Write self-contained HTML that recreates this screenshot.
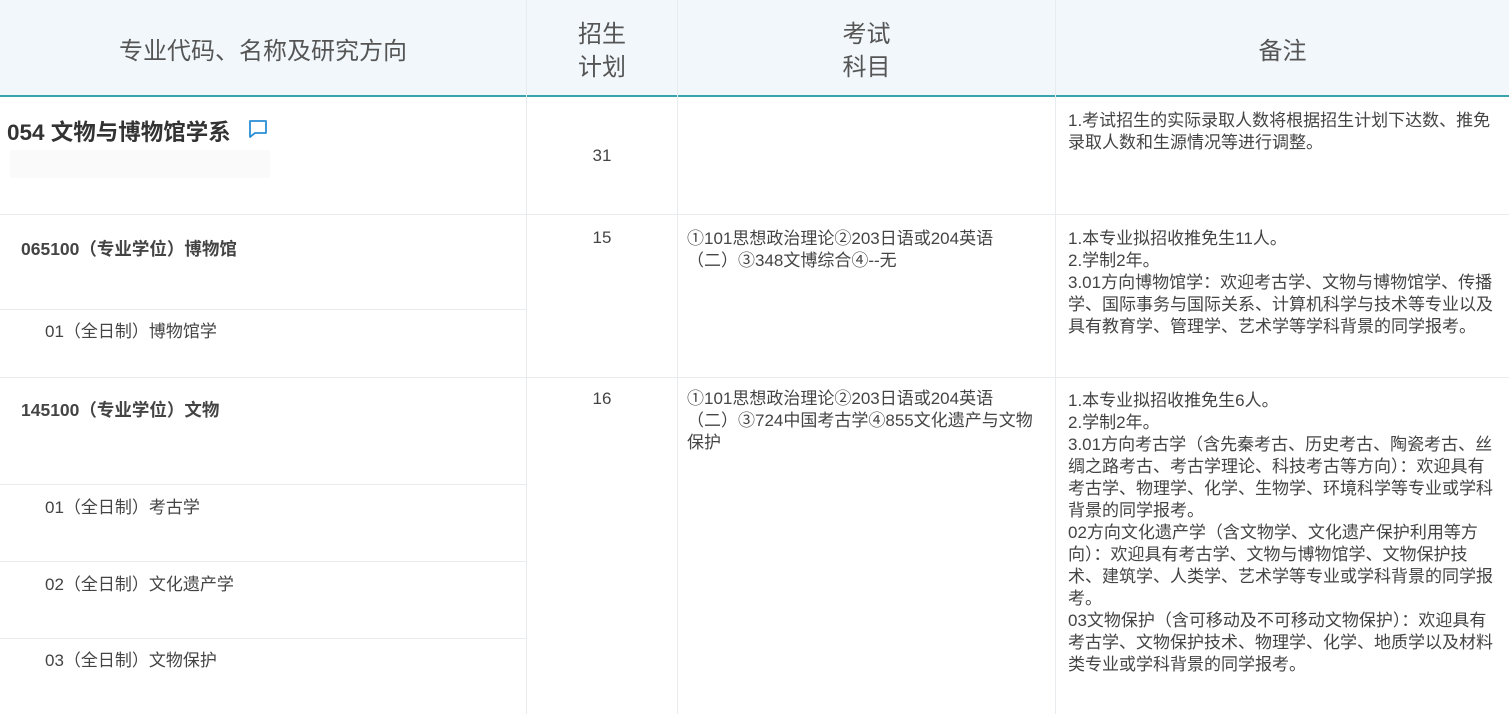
<!DOCTYPE html>
<html><head><meta charset="utf-8"><style>
body{margin:0;width:1509px;height:714px;overflow:hidden;background:#fff;font-family:"Liberation Sans","Noto Sans CJK SC",sans-serif;color:#444;position:relative}
.a{position:absolute;white-space:nowrap}
.v{position:absolute;top:0;bottom:0;width:1px;background:#e8ecef}
.h{position:absolute;height:1px;background:#e8ecef}
.hd{font-size:24px;color:#555;text-align:center;line-height:33px}
.t{font-size:17px;line-height:22px;color:#444}
</style></head><body>
<div class="a" style="left:0;top:0;width:1509px;height:95px;background:#f2f7fb"></div>
<div class="a" style="left:0;top:95px;width:1509px;height:2px;background:#3aa4ad"></div>
<div class="v" style="left:526px"></div>
<div class="v" style="left:677px"></div>
<div class="v" style="left:1055px"></div>
<div class="h" style="left:0;right:0;top:214px"></div>
<div class="h" style="left:0;right:0;top:377px"></div>
<div class="h" style="left:0;width:526px;top:309px"></div>
<div class="h" style="left:0;width:526px;top:484px"></div>
<div class="h" style="left:0;width:526px;top:561px"></div>
<div class="h" style="left:0;width:526px;top:638px"></div>

<div class="a hd" style="left:0;width:526px;top:35px">专业代码、名称及研究方向</div>
<div class="a hd" style="left:527px;width:150px;top:18px">招生<br>计划</div>
<div class="a hd" style="left:678px;width:377px;top:18px">考试<br>科目</div>
<div class="a hd" style="left:1056px;width:453px;top:35px">备注</div>

<div class="a" style="left:7px;top:115px;font-size:22.5px;font-weight:bold;color:#333">054 文物与博物馆学系</div>
<svg class="a" style="left:248px;top:119px" width="20" height="20" viewBox="0 0 20 20"><path d="M2 2h16v12H7l-5 4z" fill="none" stroke="#2b8fd6" stroke-width="1.8" stroke-linejoin="round"/></svg>
<div class="a" style="left:10px;top:150px;width:260px;height:28px;background:#fafafa"></div>

<div class="a t" style="left:527px;width:150px;text-align:center;top:145px">31</div>
<div class="a t" style="left:527px;width:150px;text-align:center;top:227px">15</div>
<div class="a t" style="left:527px;width:150px;text-align:center;top:388px">16</div>

<div class="a t" style="left:1068px;top:110px">1.考试招生的实际录取人数将根据招生计划下达数、推免<br>录取人数和生源情况等进行调整。</div>

<div class="a" style="left:21px;top:236px;font-size:17.5px;font-weight:bold;color:#444">065100（专业学位）博物馆</div>
<div class="a t" style="left:45px;top:321px">01（全日制）博物馆学</div>
<div class="a" style="left:21px;top:397px;font-size:17.5px;font-weight:bold;color:#444">145100（专业学位）文物</div>
<div class="a t" style="left:45px;top:497px">01（全日制）考古学</div>
<div class="a t" style="left:45px;top:574px">02（全日制）文化遗产学</div>
<div class="a t" style="left:45px;top:650px">03（全日制）文物保护</div>

<div class="a t" style="left:687px;top:228px">①101思想政治理论②203日语或204英语<br>（二）③348文博综合④--无</div>
<div class="a t" style="left:687px;top:388px">①101思想政治理论②203日语或204英语<br>（二）③724中国考古学④855文化遗产与文物<br>保护</div>

<div class="a t" style="left:1068px;top:228px">1.本专业拟招收推免生11人。<br>2.学制2年。<br>3.01方向博物馆学：欢迎考古学、文物与博物馆学、传播<br>学、国际事务与国际关系、计算机科学与技术等专业以及<br>具有教育学、管理学、艺术学等学科背景的同学报考。</div>
<div class="a t" style="left:1068px;top:390px">1.本专业拟招收推免生6人。<br>2.学制2年。<br>3.01方向考古学（含先秦考古、历史考古、陶瓷考古、丝<br>绸之路考古、考古学理论、科技考古等方向）：欢迎具有<br>考古学、物理学、化学、生物学、环境科学等专业或学科<br>背景的同学报考。<br>02方向文化遗产学（含文物学、文化遗产保护利用等方<br>向）：欢迎具有考古学、文物与博物馆学、文物保护技<br>术、建筑学、人类学、艺术学等专业或学科背景的同学报<br>考。<br>03文物保护（含可移动及不可移动文物保护）：欢迎具有<br>考古学、文物保护技术、物理学、化学、地质学以及材料<br>类专业或学科背景的同学报考。</div>
</body></html>
